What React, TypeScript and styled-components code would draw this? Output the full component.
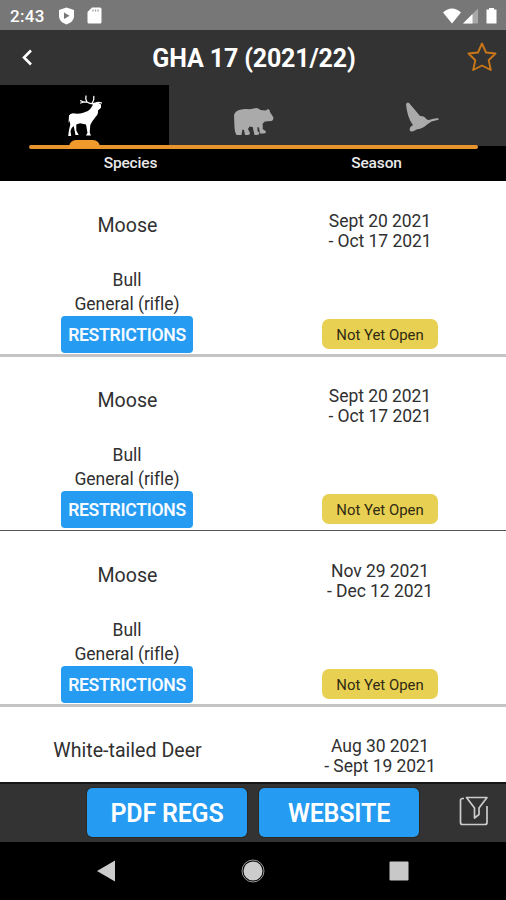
import React from "react";
import styled, { createGlobalStyle } from "styled-components";

const Global = createGlobalStyle`
  * { box-sizing: border-box; }
  html, body { margin: 0; padding: 0; background: #000; }
  body { font-family: Roboto, sans-serif; overflow: hidden; }
  button { font-family: inherit; border: 0; margin: 0; padding: 0; background: none; }
  svg { display: block; }
`;

const Screen = styled.div`
  width: 506px;
  height: 900px;
  display: flex;
  flex-direction: column;
  background: #000;
  overflow: hidden;
`;

const StatusBar = styled.div`
  height: 30px;
  flex: none;
  display: flex;
  justify-content: space-between;
  background: #777;
  color: #fff;
`;

const StatusGroup = styled.div`
  display: flex;
  align-items: center;
  gap: 12px;
  padding: 1px 7px 0 10px;
`;

const Clock = styled.span`
  width: 36px;
  font-size: 17px;
  font-weight: 500;
  line-height: 30px;
  letter-spacing: 0.35px;
`;

const Header = styled.header`
  height: 55px;
  flex: none;
  display: grid;
  grid-template-columns: 54px 1fr 54px;
  align-items: center;
  background: #333;
`;

const Title = styled.h1`
  margin: 0;
  padding: 2px 0 0 2px;
  color: #fff;
  font-size: 25px;
  font-weight: 700;
  letter-spacing: -0.15px;
  text-align: center;
  white-space: nowrap;
`;

const IconButton = styled.button<{ $shift?: number }>`
  display: flex;
  justify-content: center;
  padding-left: ${(p) => p.$shift ?? 0}px;
`;

const Tabs = styled.nav`
  position: relative;
  height: 61px;
  flex: none;
  display: grid;
  grid-template-columns: 169px 168px 169px;
  background: #333;
`;

const Tab = styled.button<{ $active?: boolean }>`
  display: flex;
  justify-content: center;
  background: ${(p) => (p.$active ? "#000" : "#333")};
  color: ${(p) => (p.$active ? "#fff" : "#aaa")};
`;

const TabRail = styled.div`
  position: absolute;
  left: 29px;
  right: 28px;
  bottom: -3px;
  height: 4px;
  border-radius: 2px;
  background: #e8942d;
`;

const TabMarker = styled.div`
  position: absolute;
  left: 69px;
  bottom: -2px;
  width: 31px;
  height: 8px;
  border-radius: 7px 7px 0 0;
  background: #f09a2b;
`;

const Columns = styled.div`
  height: 35px;
  flex: none;
  display: grid;
  grid-template-columns: 261px 231px;
  text-align: center;
  color: #e9e9e9;
  font-size: 15.5px;
  font-weight: 500;
  letter-spacing: -0.15px;
  line-height: 35px;
`;

const List = styled.main`
  height: 601px;
  flex: none;
  overflow: hidden;
  background: #fff;
`;

const Row = styled.article<{ $line: string; $thin?: boolean }>`
  height: 175px;
  display: grid;
  grid-template-columns: 254px 252px;
  position: relative;
  color: #303030;
  &::after {
    content: "";
    position: absolute;
    left: 0;
    right: 0;
    bottom: ${(p) => (p.$thin ? "0" : "-1px")};
    height: ${(p) => (p.$thin ? "1px" : "3px")};
    background: ${(p) => p.$line};
  }
`;

const Cell = styled.div`
  display: flex;
  flex-direction: column;
  align-items: center;
  white-space: nowrap;
`;

const Species = styled.div`
  margin-top: 33px;
  height: 54px;
  line-height: 24px;
  font-size: 19.6px;
  padding-left: 1px;
`;

const Detail = styled.div`
  height: 24px;
  line-height: 25px;
  font-size: 17.5px;
  letter-spacing: -0.05px;
`;

const Restrictions = styled.button`
  position: relative;
  z-index: 1;
  width: 132px;
  height: 37px;
  padding-top: 1px;
  border-radius: 4px;
  background: #259bf1;
  color: #f4faff;
  font-size: 17.6px;
  font-weight: 600;
  letter-spacing: -0.3px;
`;

const Dates = styled.div`
  margin-top: 30px;
  height: 108px;
  font-size: 17.5px;
  letter-spacing: -0.05px;
  line-height: 20px;
  text-align: center;
`;

const Badge = styled.div`
  width: 116px;
  height: 30px;
  border-radius: 7px;
  background: #e8d052;
  color: #2f2a12;
  font-size: 14.9px;
  line-height: 32px;
  text-align: center;
`;

const Actions = styled.footer`
  height: 60px;
  flex: none;
  display: flex;
  gap: 10px;
  padding: 3px 0 0 86px;
  border-top: 2px solid #161616;
  background: #333;
`;

const ActionButton = styled.button`
  width: 162px;
  height: 51px;
  padding-top: 2px;
  border: 1px solid #2c2925;
  border-radius: 6px;
  background: #259bf1;
  background-clip: padding-box;
  color: #fff;
  font-size: 25px;
  font-weight: 600;
  letter-spacing: -0.2px;
`;

const FilterButton = styled.button`
  margin-left: 18px;
  margin-top: 7px;
  height: 36px;
`;

const NavBar = styled.div`
  flex: 1;
  display: flex;
  align-items: center;
  padding: 0 97px 0 96px;
  justify-content: space-between;
`;

type Season = {
  species: string;
  from: string;
  to: string;
  line: string;
  thin?: boolean;
  detail?: [string, string];
};

const bullRifle: [string, string] = ["Bull", "General (rifle)"];

const seasons: Season[] = [
  { species: "Moose", from: "Sept 20 2021", to: "- Oct 17 2021", line: "#c4c4c4", detail: bullRifle },
  { species: "Moose", from: "Sept 20 2021", to: "- Oct 17 2021", line: "#555", thin: true, detail: bullRifle },
  { species: "Moose", from: "Nov 29 2021", to: "- Dec 12 2021", line: "#c4c4c4", detail: bullRifle },
  { species: "White-tailed Deer", from: "Aug 30 2021", to: "- Sept 19 2021", line: "#c4c4c4" },
];

const Shield = () => (
  <svg width="17" height="18" viewBox="0 0 17 18">
    <path d="M8.500 .5 16 3v6c0 4-3 7-7.500 8.500C4 16 1 13 1 9V3Z" fill="#fff" />
    <path d="m6 5.500 5.500 3.200L6 12Z" fill="#777" />
  </svg>
);

const SdCard = () => (
  <svg width="15" height="17" viewBox="0 0 15 17">
    <path d="M5 .5h8q1.500 0 1.500 1.500v13q0 1.500-1.500 1.500H2Q.5 16.500 .5 15V5Z" fill="#fff" />
    <path d="M6 2.500v2M8.500 2.500v2M11 2.500v2" stroke="#999" strokeWidth="1.200" />
  </svg>
);

const Signals = () => (
  <svg width="58" height="18" viewBox="0 0 58 18">
    <path d="M2 5.500Q11-2.500 20 5.500L11 16.500Z" fill="#fff" />
    <path d="M37 1.500v15H22Z" fill="#a8a8a8" />
    <path d="M31.500 7v9.500H22Z" fill="#fff" />
    <path d="M48 2.500V1h5v1.500h2.500v14h-10v-14Z" fill="#fff" />
  </svg>
);

const Elk = () => (
  <svg width="169" height="61" viewBox="0 0 169 61" fill="currentColor">
    <path d="M69 30.500Q70 28.500 73 28.300Q78 29.300 83.300 27.700Q88 27 90 24.300L92.300 21L93.500 17.800L98.300 17.700L101 19.500L101 22.800L98 25.500Q98.500 29 95.500 32L92 36.700L90.300 40L89.700 47.700L91 50.500H86L87.500 47.700L86 39.500L80 38.300L76.300 39.500L76.300 45.500L78.700 50H75.500L73.700 41L71.700 43L70.500 46L71.200 51H68.200L69 45L70.300 39.500L69.300 35.500L68.500 38Z" />
    <path d="M95 18.500Q91 19.500 87 17Q83.500 17.500 80.700 15.700M84 17L80.700 18M87 17Q85 14 86 11M92 18.300Q94.500 15 93.800 11.500M95 18.500Q98.500 16.500 101.500 18" fill="none" stroke="currentColor" strokeWidth="1.300" strokeLinecap="round" />
  </svg>
);

const Bear = () => (
  <svg width="168" height="61" viewBox="0 0 168 61" fill="currentColor">
    <path d="M65 30Q66.500 25.500 71 24.700Q76 23.300 81 24.300L87.500 23Q90 23.300 91.500 25L96.700 25.500L99 24Q101 24.300 101 27L104.500 32.500Q104.500 35.500 102.500 36Q98.500 36 96 36.500L93.700 38.500V44L97 46.500Q97 48.500 95 48.500H91L90 42.500L88.500 42V46L90.500 48Q90 50 88 50H85.500L83.700 42L80.500 41.500L79 44L81 48Q81 50 79 50H76L75 45L73.500 44.500L72.500 50H67.500Q65.700 47 65.500 43Z" />
  </svg>
);

const Goose = () => (
  <svg width="169" height="61" viewBox="0 0 169 61" fill="currentColor">
    <path d="M69 19Q70.500 16.500 72 18L78 25L83 31Q87 30.800 88.500 33Q89.500 35 92 35Q97 33 101.500 33.300V34.800L94.500 36.500Q90.500 39 87 42Q83 44 79.500 44.500Q76.500 47 73.800 46.500Q71.800 45 73 42.500Q74.500 40.500 76 40.200Q70 32 69 19Z" />
  </svg>
);

export default function App() {
  return (
    <Screen>
      <Global />
      <StatusBar>
        <StatusGroup>
          <Clock>2:43</Clock>
          <Shield />
          <SdCard />
        </StatusGroup>
        <StatusGroup>
          <Signals />
        </StatusGroup>
      </StatusBar>
      <Header>
        <IconButton aria-label="Back">
          <svg width="14" height="18" viewBox="0 0 14 18">
            <path d="M11 1.500 4 8.500l7 7" fill="none" stroke="#fff" strokeWidth="2.600" />
          </svg>
        </IconButton>
        <Title>GHA 17 (2021/22)</Title>
        <IconButton aria-label="Favourite" $shift={6}>
          <svg width="32" height="32" viewBox="0 0 32 32">
            <path
              d="M16 1.500 20 10.500 29.500 11.500 22.700 18.200 24.800 28 16 23.500 7.200 28 9.300 18.200 2.500 11.500 12 10.500Z"
              fill="none"
              stroke="#c97718"
              strokeWidth="1.900"
              strokeLinejoin="round"
            />
          </svg>
        </IconButton>
      </Header>
      <Tabs>
        <Tab $active aria-label="Big game"><Elk /></Tab>
        <Tab aria-label="Bear"><Bear /></Tab>
        <Tab aria-label="Birds"><Goose /></Tab>
        <TabRail />
        <TabMarker />
      </Tabs>
      <Columns>
        <span>Species</span>
        <span>Season</span>
      </Columns>
      <List>
        {seasons.map((s, i) => (
          <Row key={i} $line={s.line} $thin={s.thin}>
            <Cell>
              <Species>{s.species}</Species>
              {s.detail && (
                <>
                  <Detail>{s.detail[0]}</Detail>
                  <Detail>{s.detail[1]}</Detail>
                  <Restrictions>RESTRICTIONS</Restrictions>
                </>
              )}
            </Cell>
            <Cell>
              <Dates>{s.from}<br />{s.to}</Dates>
              {s.detail && <Badge>Not Yet Open</Badge>}
            </Cell>
          </Row>
        ))}
      </List>
      <Actions>
        <ActionButton>PDF REGS</ActionButton>
        <ActionButton>WEBSITE</ActionButton>
        <FilterButton aria-label="Filter">
          <svg width="50" height="36" viewBox="0 0 50 36" fill="none" stroke="#ccc" strokeWidth="1.700" strokeLinejoin="round">
            <path d="M16 4.500h-1.500q-2 0-2 2v22q0 2 2 2h22.500q2 0 2-2V12" />
            <path d="M18.500 3.500h20.500l-8 10.500v6.500l-4.500 3.500V14Z" />
          </svg>
        </FilterButton>
      </Actions>
      <NavBar>
        <svg width="20" height="22" viewBox="0 0 20 22"><path d="M1 11 19 .5v21Z" fill="#ccc" /></svg>
        <svg width="24" height="24" viewBox="0 0 24 24">
          <circle cx="12" cy="12" r="11" fill="none" stroke="#999" strokeWidth="1" />
          <circle cx="12" cy="12" r="9.500" fill="#ccc" />
        </svg>
        <svg width="20" height="20" viewBox="0 0 20 20"><rect x=".5" y=".5" width="19" height="19" rx="1" fill="#c8c8c8" /></svg>
      </NavBar>
    </Screen>
  );
}
